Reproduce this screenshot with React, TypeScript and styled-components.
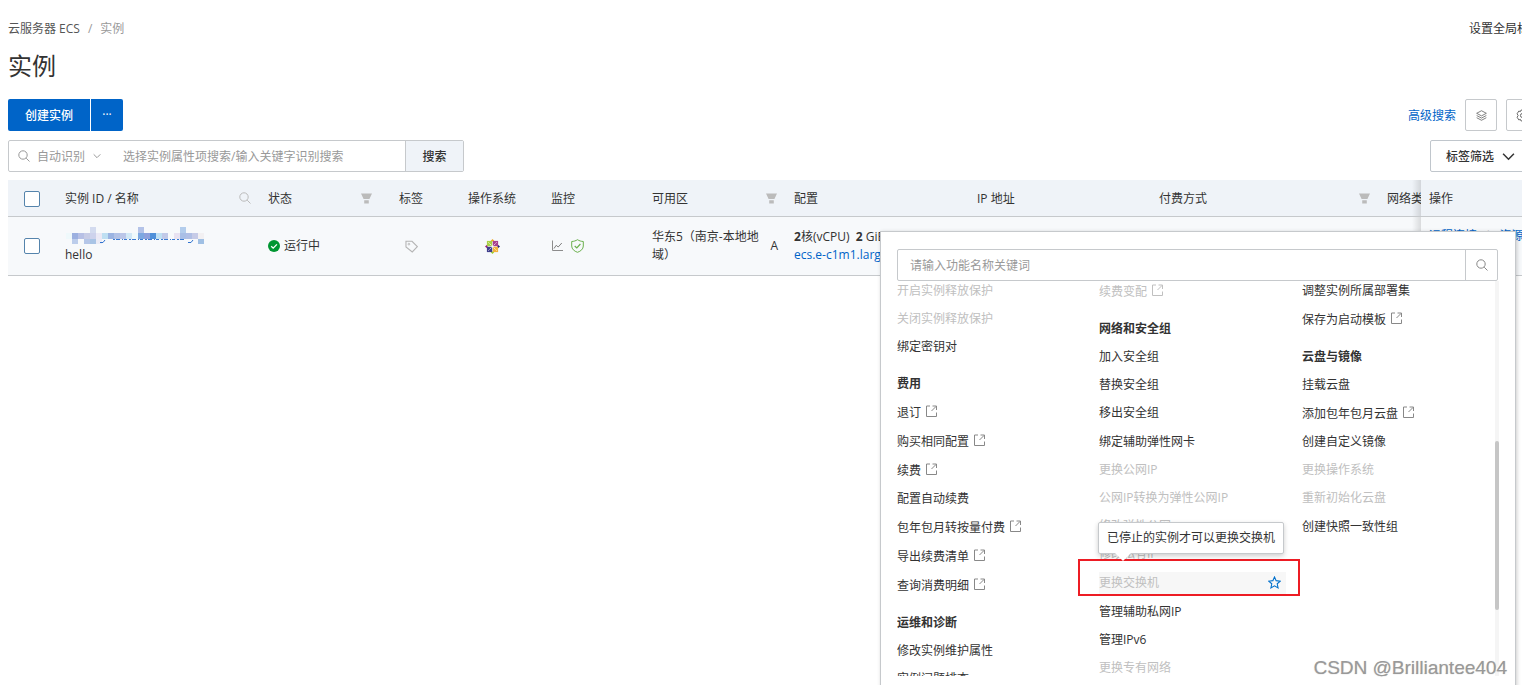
import React from "react";
import styled, { createGlobalStyle, css } from "styled-components";

const GlobalStyle = createGlobalStyle`
  *, *::before, *::after { box-sizing: border-box; }
  body {
    margin: 0;
    background: #fff;
    color: #333;
    font: 12px/18px "Open Sans", "Noto Sans CJK SC", sans-serif;
  }
  button, input, select { font: inherit; color: inherit; }
  a { text-decoration: none; color: #0064c8; }
`;

const line = "#c6c9cc";

const Shell = styled.div`
  position: relative;
  height: 100vh;
  overflow: hidden;
`;

/* The console page is wider than the window and runs off its right edge. */
const Page = styled.main`
  width: calc(100% + 19px);
  padding: 20px 0 0 8px;
`;

const TopBar = styled.header`
  display: flex;
  justify-content: space-between;
`;

const Crumbs = styled.nav`
  display: flex;
  gap: 8px;
  color: #999;
  a { color: #555; }
`;

const GlobalTags = styled.a`
  color: #333;
`;

const Title = styled.h1`
  margin: 10px 0 15px;
  font-size: 24px;
  line-height: 36px;
  font-weight: 400;
`;

const Bar = styled.div`
  display: flex;
  justify-content: space-between;
  height: 32px;
  margin-bottom: 9px;
  padding-right: 3px;
`;

const Group = styled.div<{ $gap?: number }>`
  display: flex;
  align-items: center;
  gap: ${(p) => p.$gap ?? 0}px;
`;

const Primary = styled.button<{ $side: "left" | "right" }>`
  height: 32px;
  width: ${(p) => (p.$side === "left" ? 82 : 32)}px;
  padding: ${(p) => (p.$side === "left" ? "2px 0 0" : "0")};
  border: 0;
  border-radius: ${(p) => (p.$side === "left" ? "2px 0 0 2px" : "0 2px 2px 0")};
  background: #0064c8;
  color: #fff;
  font-weight: ${(p) => (p.$side === "left" ? 500 : 400)};
`;

const AdvancedLink = styled.a`
  padding-top: 2px;
`;

const IconButton = styled.button`
  display: grid;
  place-items: center;
  width: 32px;
  height: 32px;
  padding: 0;
  border: 1px solid ${line};
  border-radius: 2px;
  background: #fff;
  color: #666;
`;

const TagFilter = styled.button`
  display: flex;
  align-items: center;
  gap: 8px;
  width: 108px;
  height: 32px;
  padding: 1px 15px 0;
  border: 1px solid #c0c6cc;
  border-radius: 2px;
  background: #fff;
  font-weight: 500;
`;

const SearchForm = styled.form`
  display: flex;
  align-items: center;
  width: 456px;
  height: 32px;
  border: 1px solid ${line};
  border-radius: 2px;
  color: #999;
  padding-left: 9px;
`;

const KindSelect = styled.select`
  appearance: none;
  width: 56px;
  margin-left: 7px;
  padding: 1px 0 0;
  border: 0;
  background: none;
  color: #999;
`;

const TextInput = styled.input`
  flex: 1;
  min-width: 0;
  height: 30px;
  padding: 0 12px;
  border: 0;
  outline: 0;
  background: none;
  &::placeholder { color: #999; opacity: 1; }
`;

const KeywordInput = styled(TextInput)`
  padding: 1px 22px 0;
`;

const SearchButton = styled.button`
  width: 58px;
  height: 30px;
  padding: 2px 0 0;
  border: 0;
  border-left: 1px solid ${line};
  background: #eff3f8;
  color: #333;
  font-weight: 500;
`;

const Table = styled.table`
  width: 100%;
  margin-top: -1px;
  table-layout: fixed;
  border-collapse: separate;
  border-spacing: 0;
`;

const HeadCell = styled.th<{ $center?: boolean }>`
  height: 37px;
  padding: 2px 8px 0;
  border-bottom: 1px solid ${line};
  background: #eff3f8;
  font-weight: 400;
  text-align: ${(p) => (p.$center ? "center" : "left")};
  white-space: nowrap;
  overflow: hidden;
`;

const HeadInner = styled.div`
  display: flex;
  align-items: center;
  justify-content: space-between;
  svg { color: #bbb; margin: 0 1px 2px 0; }
`;

const Cell = styled.td<{ $center?: boolean }>`
  height: 59px;
  padding: 0 8px;
  border-bottom: 1px solid ${line};
  background: #f7f9fb;
  text-align: ${(p) => (p.$center ? "center" : "left")};
  white-space: nowrap;
  svg { display: block; margin: ${(p) => (p.$center ? "0 auto" : "0")}; }
`;

const pinned = css`
  position: relative;
  overflow: visible;
  &::before {
    content: "";
    position: absolute;
    top: 0;
    bottom: 0;
    left: -9px;
    width: 9px;
    background: linear-gradient(to right, transparent, rgba(0, 0, 0, 0.12));
  }
`;

const PinnedHead = styled(HeadCell)`${pinned}`;
const PinnedCell = styled(Cell)`
  ${pinned}
  padding-top: 10px;
  vertical-align: top;
`;

const Actions = styled.div`
  display: flex;
  gap: 8px;
  color: #ccc;
`;

const Check = styled.input`
  appearance: none;
  display: block;
  width: 16px;
  height: 16px;
  margin: 0 8px;
  border: 1px solid #5584ac;
  border-radius: 2px;
  background: #fff;
`;

const Zone = styled.div`
  display: flex;
  align-items: center;
  justify-content: space-between;
  white-space: normal;
  span { width: 112px; }
`;

const Panel = styled.section`
  position: absolute;
  top: 231px;
  right: 6px;
  width: 636px;
  padding: 17px 17px 16px 16px;
  border: 1px solid ${line};
  background: #fff;
  box-shadow: 1px 1px 4px rgba(0, 0, 0, 0.2);
`;

const PanelSearch = styled.form`
  display: flex;
  height: 32px;
  border: 1px solid ${line};
  border-radius: 2px;
  background: #fff;
  button {
    display: grid;
    place-items: center;
    width: 32px;
    padding: 0;
    border: 0;
    border-left: 1px solid ${line};
    background: none;
    color: #888;
  }
`;

const Scroller = styled.div`
  display: flex;
  height: 395px;
  margin-right: -1px;
  overflow: hidden;
`;

const Columns = styled.div`
  flex: 1;
  display: grid;
  grid-template-columns: 186px 187px 187px;
  column-gap: 16px;
  align-items: start;
  margin-top: -4px;
`;

const Track = styled.div`
  width: 4px;
  padding-top: 160px;
  background: #f5f5f5;
`;

const Thumb = styled.div`
  height: 169px;
  border-radius: 2px;
  background: #c6c6c6;
`;

const Heading = styled.h2`
  margin: 8px 0 0;
  height: 29px;
  font-size: 12px;
  line-height: 29px;
  font-weight: 700;
`;

const List = styled.ul`
  margin: 0;
  padding: 0;
  list-style: none;
`;

const Item = styled.li<{ $tall?: boolean }>`
  position: relative;
  display: flex;
  align-items: center;
  height: ${(p) => (p.$tall ? 29 : 28)}px;
`;

const Action = styled.button<{ $active?: boolean }>`
  display: flex;
  align-items: center;
  gap: 4px;
  width: 100%;
  height: 22px;
  padding: 0;
  border: 0;
  background: ${(p) => (p.$active ? "#f7f7f7" : "none")};
  text-align: left;
  white-space: nowrap;
  svg { color: #888; margin-bottom: 3px; }
  &:disabled { color: #c0c0c0; }
  &:disabled svg { color: #c0c0c0; }
`;

const StarButton = styled.button`
  position: absolute;
  right: 5px;
  display: grid;
  padding: 0;
  border: 0;
  background: none;
  color: #0070cc;
`;

const Tooltip = styled.div`
  position: absolute;
  z-index: 2;
  left: -1px;
  bottom: 43px;
  padding: 6px 8px;
  border: 1px solid ${line};
  border-radius: 2px;
  background: #fff;
  box-shadow: 0 2px 5px rgba(0, 0, 0, 0.2);
  white-space: nowrap;
  &::after {
    content: "";
    position: absolute;
    left: 16px;
    top: 100%;
    border: 8px solid transparent;
    border-top-color: #fff;
    border-bottom: 0;
  }
`;

const Marker = styled.div`
  position: absolute;
  z-index: 1;
  inset: -9px -14px 1px -21px;
  border: 2px solid #ed1c24;
  pointer-events: none;
`;

const Watermark = styled.div`
  position: absolute;
  right: 15px;
  bottom: 5px;
  font: 19px/24px "Liberation Sans", sans-serif;
  color: #999;
  text-shadow: -1px -1px 1px #fff, 0 0 1px #999;
`;

const Svg = ({ size = 12, children }: { size?: number; children: React.ReactNode }) => (
  <svg width={size} height={size} viewBox="0 0 12 12" fill="none" stroke="currentColor" aria-hidden="true">
    {children}
  </svg>
);

const Magnifier = () => (
  <Svg>
    <circle cx="5" cy="5" r="4.2" />
    <path d="M8.2 8.2 11.5 11.5" />
  </Svg>
);
const Chevron = ({ size = 8, width = 1.5 }) => (
  <Svg size={size}>
    <path d="M1 3.5 6 8.5 11 3.5" strokeWidth={width} />
  </Svg>
);
const Funnel = () => (
  <Svg size={11}>
    <path d="M0 .5H12L9.2 6.5H2.8ZM3.5 8H8.5V11.5H3.5Z" fill="currentColor" stroke="none" />
  </Svg>
);
const External = () => (
  <Svg>
    <path d="M5 1H1.5V11.5H11.5V7.5M7.5 1H11.5V5M11.2 1.3 6.5 6" />
  </Svg>
);
const Layers = () => (
  <Svg size={11}>
    <path d="M6 .8 11.3 3.6 6 6.4.7 3.6ZM.7 6 6 8.8 11.3 6M.7 8.4 6 11.2 11.3 8.4" strokeWidth=".9" />
  </Svg>
);
const Gear = () => (
  <Svg size={13}>
    <path d="M4.6 1H7.4L7.9 2.4 9.4 1.9 11 4.4 10 6 11 7.6 9.4 10.1 7.9 9.6 7.4 11H4.6L4.1 9.6 2.6 10.1 1 7.6 2 6 1 4.4 2.6 1.9 4.1 2.4Z" strokeWidth=".9" />
    <circle cx="6" cy="6" r="1.9" strokeWidth=".9" />
  </Svg>
);
const Star = () => (
  <Svg size={13}>
    <path d="M6 .9 7.5 4.3 11.3 4.7 8.5 7.2 9.3 11 6 9.1 2.7 11 3.5 7.2.7 4.7 4.5 4.3Z" />
  </Svg>
);
const Tag = () => (
  <Svg size={13}>
    <path d="M.9 1.2H6.5L11.4 6.2 6.7 11 .9 6.5Z" stroke="#b4b4b4" />
    <circle cx="3.6" cy="3.8" r=".8" stroke="#b4b4b4" strokeWidth=".8" />
  </Svg>
);
const Running = () => (
  <Svg>
    <circle cx="6" cy="6" r="6" fill="#009632" stroke="none" />
    <path d="M3.2 6.2 5.2 8.1 8.9 4.4" stroke="#fff" strokeWidth="1.3" />
  </Svg>
);
const Chart = () => (
  <Svg>
    <path d="M1.5 .5V10.5H12" stroke="#8c8c8c" />
    <path d="M3 8.5 5.2 5.3 7.2 7 10.8 3" stroke="#808080" />
  </Svg>
);
const Shield = () => (
  <svg width="13" height="14" viewBox="0 0 13 14" fill="none" stroke="#6ab04c" aria-hidden="true">
    <path d="M6.5.7C8.2 1.8 10.2 2.4 12.3 2.5V7C12.3 10 9.8 12.2 6.5 13.3 3.2 12.2.7 10 .7 7V2.5C2.8 2.4 4.8 1.8 6.5.7Z" />
    <path d="M3.7 7 5.8 9 9.4 5" strokeWidth="1.2" />
  </svg>
);
const CentOS = () => (
  <svg width="15" height="15" viewBox="0 0 15 15" aria-hidden="true">
    <path d="M7.5 0 9.8 2.6H5.2Z" fill="#efa724" />
    <path d="M15 7.5 12.4 9.8V5.2Z" fill="#262577" />
    <path d="M7.5 15 5.2 12.4H9.8Z" fill="#9ccd2a" />
    <path d="M0 7.5 2.6 5.2V9.8Z" fill="#932279" />
    <path d="M1.9 1.9H7.2V7.2H1.9Z" fill="#a9d046" />
    <path d="M7.8 1.9H13.1V7.2H7.8Z" fill="#a8408f" />
    <path d="M7.8 7.8H13.1V13.1H7.8Z" fill="#f3b33d" />
    <path d="M1.9 7.8H7.2V13.1H1.9Z" fill="#3f3e8c" />
    <path d="M3.4 3.4 11.6 11.6M11.6 3.4 3.4 11.6" stroke="#fff" strokeWidth=".8" strokeDasharray="1.6 .9" />
    <circle cx="7.5" cy="7.5" r="1" fill="#fff" />
  </svg>
);

/* Pixelated blocks that hide the instance ID: [column, y, colour], 6px wide. */
const blocks: [number, number, string][] = [
  [5, -1, "#d3dbef"], [13, -1, "#b4c3e8"], [20, -1, "#b3cdec"],
  [1, 5, "#eff9fb"], [2, 5, "#9cb0e0"], [3, 5, "#b7c0e5"], [4, 5, "#c7cce6"], [5, 5, "#cdd2ec"],
  [6, 5, "#ebe9f5"], [7, 5, "#bedff2"], [8, 5, "#9bb4e2"], [9, 5, "#b2c2e6"], [10, 5, "#bbc6e8"],
  [11, 5, "#d2e8f6"], [12, 5, "#eff9fb"], [13, 5, "#7da8e1"], [14, 5, "#8ea1dc"], [15, 5, "#4f90d9"],
  [16, 5, "#bfe0f3"], [17, 5, "#c1c9e8"], [19, 5, "#e8e2f1"], [20, 5, "#a9bfe6"], [21, 5, "#b0bfe5"],
  [22, 5, "#c6cbe7"], [23, 5, "#f2f0f2"],
  [2, 11, "#bccdeb"], [4, 11, "#b5c6e8"], [5, 11, "#a9c4e5"], [6, 11, "#ebebf5"], [23, 11, "#a0c0e4"],
];
const MaskedId = () => (
  <svg width="140" height="18" overflow="visible" role="img" aria-label="ID">
    {blocks.map(([column, y, fill]) => (
      <rect key={`${column}-${y}`} x={column * 6 - 5} y={y} width="6" height={y === 11 ? 5 : 6} fill={fill} />
    ))}
    <path d="M35 14.5H38L40 12M123 14.5H126L128 12" stroke="#2f73cf" fill="none" />
    <path d="M48 11.5H120" stroke="#3b7bd2" strokeDasharray="2 1 4 2 1 1 3 2" />
  </svg>
);

type Entry = { text: string; off?: boolean; ext?: boolean; active?: boolean; tall?: boolean };
type Section = { title?: string; items: Entry[] };

const columns: Section[][] = [
  [
    { items: [{ text: "开启实例释放保护", off: true }, { text: "关闭实例释放保护", off: true }, { text: "绑定密钥对" }] },
    {
      title: "费用",
      items: [
        { text: "退订", ext: true },
        { text: "购买相同配置", ext: true },
        { text: "续费", ext: true },
        { text: "配置自动续费" },
        { text: "包年包月转按量付费", ext: true },
        { text: "导出续费清单", ext: true },
        { text: "查询消费明细", ext: true },
      ],
    },
    { title: "运维和诊断", items: [{ text: "修改实例维护属性" }, { text: "实例问题排查" }] },
  ],
  [
    { items: [{ text: "续费变配", off: true, ext: true }] },
    {
      title: "网络和安全组",
      items: [
        { text: "加入安全组" },
        { text: "替换安全组" },
        { text: "移出安全组" },
        { text: "绑定辅助弹性网卡", tall: true },
        { text: "更换公网IP", off: true },
        { text: "公网IP转换为弹性公网IP", off: true },
        { text: "修改弹性公网", off: true },
        { text: "修改私有IP", off: true },
        { text: "更换交换机", off: true, active: true },
        { text: "管理辅助私网IP", tall: true },
        { text: "管理IPv6" },
        { text: "更换专有网络", off: true },
      ],
    },
  ],
  [
    { items: [{ text: "调整实例所属部署集" }, { text: "保存为启动模板", ext: true }] },
    {
      title: "云盘与镜像",
      items: [
        { text: "挂载云盘" },
        { text: "添加包年包月云盘", ext: true },
        { text: "创建自定义镜像" },
        { text: "更换操作系统", off: true },
        { text: "重新初始化云盘", off: true },
        { text: "创建快照一致性组", tall: true },
      ],
    },
  ],
];

const widths = [49, 203, 121, 60, 102, 101, 142, 183, 182, 228, 42];

const ActionPanel = () => (
  <Panel>
    <PanelSearch onSubmit={(e) => e.preventDefault()}>
      <TextInput aria-label="功能名称" placeholder="请输入功能名称关键词" />
      <button aria-label="搜索功能"><Magnifier /></button>
    </PanelSearch>
    <Scroller>
      <Columns>
        {columns.map((sections, i) => (
          <div key={i}>
            {sections.map((s, j) => (
              <React.Fragment key={j}>
                {s.title && <Heading>{s.title}</Heading>}
                <List>
                  {s.items.map((it) => (
                    <Item key={it.text} $tall={it.ext || it.active || it.tall}>
                      <Action disabled={it.off} $active={it.active}>
                        {it.text}
                        {it.ext && <External />}
                      </Action>
                      {it.active && (
                        <>
                          <StarButton aria-label="收藏"><Star /></StarButton>
                          <Tooltip role="tooltip">已停止的实例才可以更换交换机</Tooltip>
                          <Marker />
                        </>
                      )}
                    </Item>
                  ))}
                </List>
              </React.Fragment>
            ))}
          </div>
        ))}
      </Columns>
      <Track><Thumb /></Track>
    </Scroller>
  </Panel>
);

export default function App() {
  return (
    <Shell>
      <GlobalStyle />
      <Page>
        <TopBar>
          <Crumbs>
            <a href="#ecs">云服务器 ECS</a>
            <span>/</span>
            <span>实例</span>
          </Crumbs>
          <GlobalTags href="#tags">设置全局标签</GlobalTags>
        </TopBar>
        <Title>实例</Title>
        <Bar>
          <Group $gap={1}>
            <Primary $side="left">创建实例</Primary>
            <Primary $side="right" aria-label="更多">···</Primary>
          </Group>
          <Group $gap={9}>
            <AdvancedLink href="#advanced">高级搜索</AdvancedLink>
            <IconButton aria-label="分组"><Layers /></IconButton>
            <IconButton aria-label="设置"><Gear /></IconButton>
          </Group>
        </Bar>
        <Bar>
          <SearchForm onSubmit={(e) => e.preventDefault()}>
            <Magnifier />
            <KindSelect aria-label="识别方式"><option>自动识别</option></KindSelect>
            <Chevron />
            <KeywordInput aria-label="关键字" placeholder="选择实例属性项搜索/输入关键字识别搜索" />
            <SearchButton>搜索</SearchButton>
          </SearchForm>
          <TagFilter>标签筛选<Chevron size={13} width={1.4} /></TagFilter>
        </Bar>
        <Table>
          <colgroup>
            {widths.map((w, i) => <col key={i} style={{ width: w }} />)}
            <col />
          </colgroup>
          <thead>
            <tr>
              <HeadCell><Check type="checkbox" aria-label="全选" /></HeadCell>
              <HeadCell><HeadInner>实例 ID / 名称<Magnifier /></HeadInner></HeadCell>
              <HeadCell><HeadInner>状态<Funnel /></HeadInner></HeadCell>
              <HeadCell $center>标签</HeadCell>
              <HeadCell $center>操作系统</HeadCell>
              <HeadCell>监控</HeadCell>
              <HeadCell><HeadInner>可用区<Funnel /></HeadInner></HeadCell>
              <HeadCell>配置</HeadCell>
              <HeadCell>IP 地址</HeadCell>
              <HeadCell><HeadInner>付费方式<Funnel /></HeadInner></HeadCell>
              <HeadCell>网络类型</HeadCell>
              <PinnedHead>操作</PinnedHead>
            </tr>
          </thead>
          <tbody>
            <tr>
              <Cell><Check type="checkbox" aria-label="选择 hello" /></Cell>
              <Cell><MaskedId />hello</Cell>
              <Cell><Group $gap={4}><Running />运行中</Group></Cell>
              <Cell $center><Tag /></Cell>
              <Cell $center><CentOS /></Cell>
              <Cell><Group $gap={8}><Chart /><Shield /></Group></Cell>
              <Cell><Zone><span>华东5（南京-本地地域）</span>A</Zone></Cell>
              <Cell>
                <b>2</b>核(vCPU)&nbsp; <b>2</b> GiB<br />
                <a href="#type">ecs.e-c1m1.large</a>
              </Cell>
              <Cell />
              <Cell />
              <Cell />
              <PinnedCell>
                <Actions>
                  <a href="#connect">远程连接</a>|<a href="#change">资源变配</a>
                </Actions>
              </PinnedCell>
            </tr>
          </tbody>
        </Table>
      </Page>
      <ActionPanel />
      <Watermark>CSDN @Brilliantee404</Watermark>
    </Shell>
  );
}
